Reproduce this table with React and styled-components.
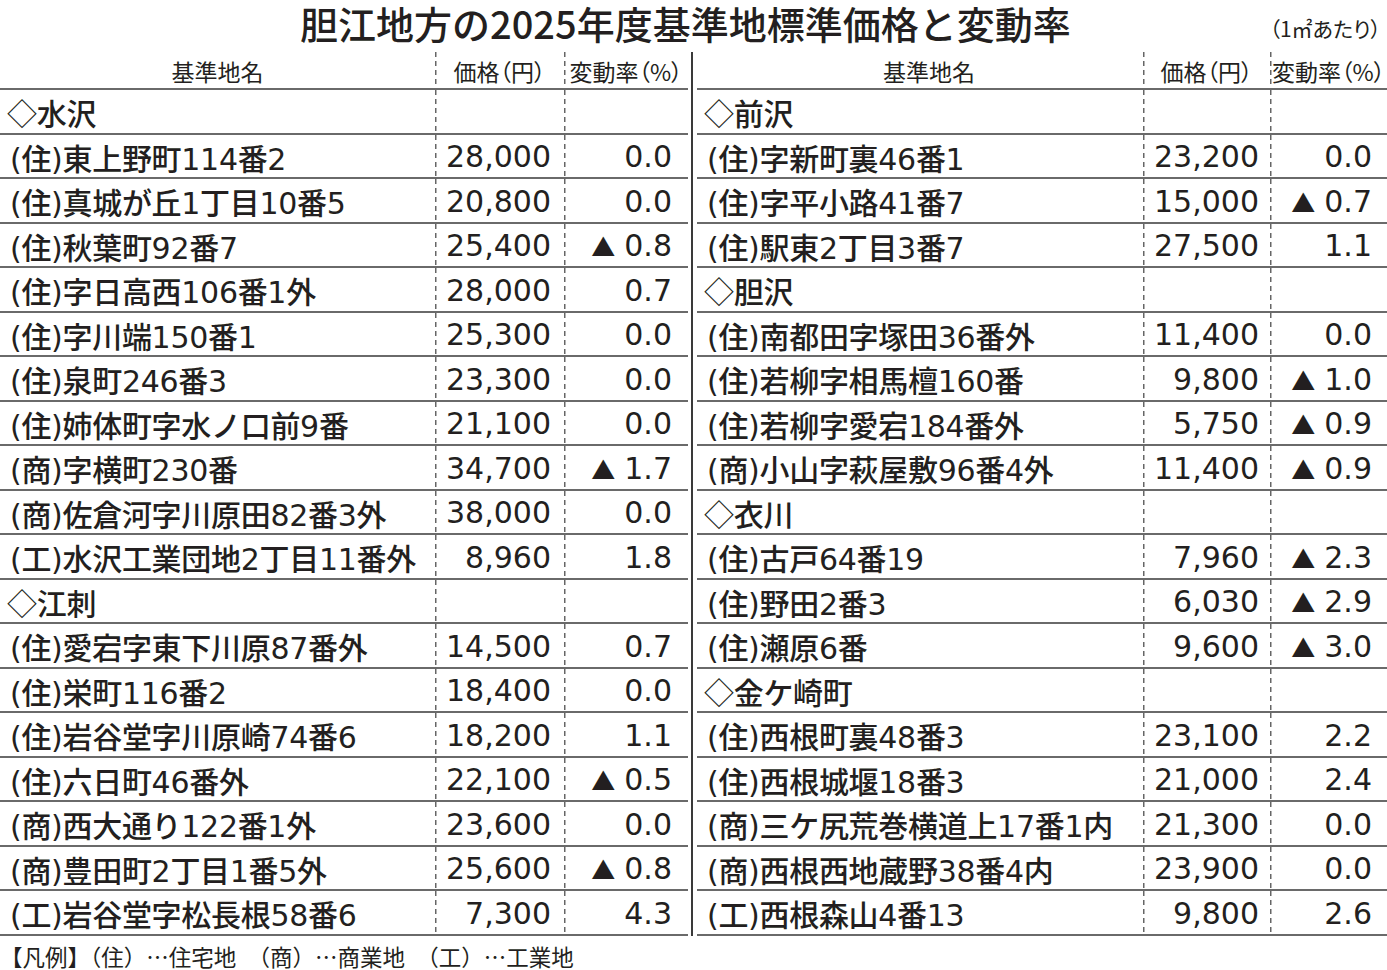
import React from 'react';
import styled, { createGlobalStyle } from 'styled-components';

const GlobalStyle = createGlobalStyle`
  * {
    box-sizing: border-box;
  }
  body {
    margin: 0;
    background: #fff;
    color: #231f20;
    font-family: "DejaVu Sans", "Noto Sans CJK JP", sans-serif;
  }
`;

const Page = styled.div`
  width: 1387px;
  height: 970px;
  overflow: hidden;
`;

const TitleBar = styled.header`
  display: grid;
  grid-template-columns: 300px max-content 1fr;
  align-items: start;
  height: 52px;
`;

const Title = styled.h1`
  grid-column: 2;
  margin: -6px 0 0;
  padding-right: 4px;
  font-family: "Noto Sans CJK JP", sans-serif;
  font-size: 38px;
  font-weight: 500;
  line-height: 58px;
  white-space: nowrap;
`;

const Unit = styled.span`
  justify-self: end;
  margin-top: 16px;
  padding-right: 6px;
  font-family: "Noto Sans CJK JP", sans-serif;
  font-size: 21px;
  line-height: 24px;
  font-feature-settings: "palt";
  white-space: nowrap;
`;

const Tables = styled.div`
  display: flex;
  align-items: stretch;
`;

const Divider = styled.div`
  width: 2px;
  margin: 0 4px 0 3px;
  background: #3a3a3a;
`;

const Table = styled.div`
  width: ${(p) => p.$width}px;
`;

const Row = styled.div`
  display: grid;
  grid-template-columns: ${(p) => p.$cols};
  height: ${(p) => (p.$head ? 38 : 44.5)}px;
  border-bottom: 2px solid #6a6a6a;
`;

const Cell = styled.div`
  display: flex;
  align-items: center;
  justify-content: flex-end;
  padding: 0 ${(p) => p.$pr || 0}px 0 0;
  font-size: 30px;
  font-weight: 500;
  white-space: nowrap;
  background-image: repeating-linear-gradient(
    to bottom,
    #666 0 5px,
    transparent 5px 9px
  );
  background-size: 1.5px 100%;
  background-repeat: no-repeat;
  background-position: left top;
`;

const NameCell = styled.div`
  display: flex;
  align-items: center;
  padding-left: 10px;
  font-size: 30px;
  font-weight: 500;
  letter-spacing: -0.3px;
  white-space: nowrap;
`;

const HeadCell = styled.div`
  display: flex;
  align-items: center;
  justify-content: center;
  padding-left: ${(p) => p.$pl || 0}px;
  padding-top: 2px;
  font-family: "Noto Sans CJK JP", sans-serif;
  font-size: 23px;
  font-feature-settings: "palt";
  white-space: nowrap;
  background-image: ${(p) =>
    p.$first
      ? 'none'
      : 'repeating-linear-gradient(to bottom, #666 0 5px, transparent 5px 9px)'};
  background-size: 1.5px 100%;
  background-repeat: no-repeat;
  background-position: left top;
`;

const Diamond = styled.span`
  font-family: "Noto Sans CJK JP", sans-serif;
  font-weight: 400;
  margin-left: -3px;
`;

const Tri = styled.span`
  font-family: "Noto Sans CJK JP", sans-serif;
  font-size: 24px;
  margin-right: 9px;
`;

const Legend = styled.p`
  margin: 8px 0 0;
  font-family: "Noto Sans CJK JP", sans-serif;
  font-size: 22.5px;
  line-height: 24px;
  white-space: nowrap;
`;

const left = [
  ['水沢'],
  ['(住)東上野町114番2', '28,000', '0.0'],
  ['(住)真城が丘1丁目10番5', '20,800', '0.0'],
  ['(住)秋葉町92番7', '25,400', '0.8', true],
  ['(住)字日高西106番1外', '28,000', '0.7'],
  ['(住)字川端150番1', '25,300', '0.0'],
  ['(住)泉町246番3', '23,300', '0.0'],
  ['(住)姉体町字水ノ口前9番', '21,100', '0.0'],
  ['(商)字横町230番', '34,700', '1.7', true],
  ['(商)佐倉河字川原田82番3外', '38,000', '0.0'],
  ['(工)水沢工業団地2丁目11番外', '8,960', '1.8'],
  ['江刺'],
  ['(住)愛宕字東下川原87番外', '14,500', '0.7'],
  ['(住)栄町116番2', '18,400', '0.0'],
  ['(住)岩谷堂字川原崎74番6', '18,200', '1.1'],
  ['(住)六日町46番外', '22,100', '0.5', true],
  ['(商)西大通り122番1外', '23,600', '0.0'],
  ['(商)豊田町2丁目1番5外', '25,600', '0.8', true],
  ['(工)岩谷堂字松長根58番6', '7,300', '4.3'],
];

const right = [
  ['前沢'],
  ['(住)字新町裏46番1', '23,200', '0.0'],
  ['(住)字平小路41番7', '15,000', '0.7', true],
  ['(住)駅東2丁目3番7', '27,500', '1.1'],
  ['胆沢'],
  ['(住)南都田字塚田36番外', '11,400', '0.0'],
  ['(住)若柳字相馬檀160番', '9,800', '1.0', true],
  ['(住)若柳字愛宕184番外', '5,750', '0.9', true],
  ['(商)小山字萩屋敷96番4外', '11,400', '0.9', true],
  ['衣川'],
  ['(住)古戸64番19', '7,960', '2.3', true],
  ['(住)野田2番3', '6,030', '2.9', true],
  ['(住)瀬原6番', '9,600', '3.0', true],
  ['金ケ崎町'],
  ['(住)西根町裏48番3', '23,100', '2.2'],
  ['(住)西根城堰18番3', '21,000', '2.4'],
  ['(商)三ケ尻荒巻横道上17番1内', '21,300', '0.0'],
  ['(商)西根西地蔵野38番4内', '23,900', '0.0'],
  ['(工)西根森山4番13', '9,800', '2.6'],
];

const PriceTable = ({ rows, width, cols, pricePad, ratePad, headOffset }) => (
  <Table $width={width}>
    <Row $cols={cols} $head>
      <HeadCell $first $pl={headOffset}>基準地名</HeadCell>
      <HeadCell>価格（円）</HeadCell>
      <HeadCell>変動率（%）</HeadCell>
    </Row>
    {rows.map(([name, price, rate, up], i) => (
      <Row $cols={cols} key={i}>
        <NameCell>
          {price ? (
            name
          ) : (
            <>
              <Diamond>◇</Diamond>
              {name}
            </>
          )}
        </NameCell>
        <Cell $pr={pricePad}>{price}</Cell>
        <Cell $pr={ratePad}>
          {up && <Tri>▲</Tri>}
          {rate}
        </Cell>
      </Row>
    ))}
  </Table>
);

const App = () => {
  return (
    <Page>
      <GlobalStyle />
      <TitleBar>
        <Title>胆江地方の2025年度基準地標準価格と変動率</Title>
        <Unit>（1㎡あたり）</Unit>
      </TitleBar>
      <Tables>
        <PriceTable
          rows={left}
          width={688}
          cols='435px 129px 124px'
          pricePad={13}
          ratePad={16}
          headOffset={0}
        />
        <Divider />
        <PriceTable
          rows={right}
          width={690}
          cols='446px 127px 117px'
          pricePad={11}
          ratePad={15}
          headOffset={18}
        />
      </Tables>
      <Legend>【凡例】（住）…住宅地　（商）…商業地　（工）…工業地</Legend>
    </Page>
  );
};

export default App;
